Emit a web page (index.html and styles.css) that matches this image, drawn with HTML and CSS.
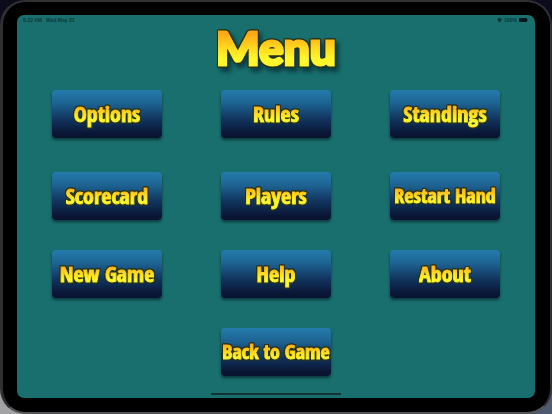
FILE: index.html
```html
<!DOCTYPE html>
<html lang="en">
<head>
<meta charset="utf-8">
<meta name="viewport" content="width=device-width, initial-scale=1">
<title>Menu</title>
<link rel="stylesheet" href="styles.css">
</head>
<body>
<div class="device">
  <main class="screen">
    <header class="status">
      <span class="status-group"><span>6:22 AM</span><span>Wed May 31</span></span>
      <span class="status-group status-right">
        <svg class="wifi" viewBox="0 0 12 9" aria-hidden="true"><path d="M0 3Q6-2 12 3L10.700 4.500Q6 .600 1.300 4.500ZM2.400 5.500Q6 2.500 9.600 5.500L6 9Z"/></svg>
        <span>100%</span>
        <svg class="battery" viewBox="0 0 20 9" aria-hidden="true"><rect width="18" height="9" rx="2"/><path d="M18.500 3Q20 3.500 20 4.500T18.500 6Z"/></svg>
      </span>
    </header>
    <h1 class="title"><span class="gold">Menu</span></h1>
    <nav class="menu">
      <button class="key" type="button"><span class="gold">Options</span></button>
      <button class="key" type="button"><span class="gold">Rules</span></button>
      <button class="key" type="button"><span class="gold">Standings</span></button>
      <button class="key" type="button"><span class="gold">Scorecard</span></button>
      <button class="key" type="button"><span class="gold">Players</span></button>
      <button class="key key-long" type="button"><span class="gold">Restart Hand</span></button>
      <button class="key" type="button"><span class="gold">New Game</span></button>
      <button class="key" type="button"><span class="gold">Help</span></button>
      <button class="key" type="button"><span class="gold">About</span></button>
      <button class="key key-long key-back" type="button"><span class="gold">Back to Game</span></button>
    </nav>
    <div class="home-bar"></div>
  </main>
</div>
</body>
</html>
```
FILE: styles.css
```css
* { box-sizing: border-box; }

body {
  margin: 0;
  min-height: 100vh;
  display: flex;
  background: linear-gradient(90deg, transparent 50%, #4d5a70 50%) 0 100% / 100% 40px no-repeat,
    linear-gradient(#0c0b1c 0 75%, #a3a3a6 95%);
}

.device {
  flex: 1;
  display: flex;
  padding: 13px 15px 14px 14px;
  border: 2px solid #303033;
  border-left-width: 3px;
  border-bottom-color: #555456;
  border-radius: 25px;
  background: #000;
}

.screen {
  flex: 1;
  display: flex;
  flex-direction: column;
  border-radius: 7px;
  background: #196f6d;
}

.status {
  display: flex;
  justify-content: space-between;
  padding: 2px 7px 0 6px;
  font: bold 5px/6px "Liberation Sans", sans-serif;
  color: #0b3a3c;
}

.status-group { display: flex; gap: 4px; }
.status-right { align-items: center; gap: 2px; }
.status svg { fill: #04191c; }
.wifi { width: 5px; height: 4px; }
.battery { width: 9px; height: 4px; }

.title {
  margin: 0;
  font: 900 46px/50px Lato, sans-serif;
  text-align: center;
  filter: drop-shadow(3px 4px 2px #0b3c42);
}

.gold {
  display: inline-block;
  background: linear-gradient(#ffa816 22%, #ffd91f 50%, #fff62b 70%);
  background-clip: text;
  -webkit-background-clip: text;
  color: transparent;
  -webkit-text-stroke: 1px transparent;
  filter: drop-shadow(1px 0 0 #26331b) drop-shadow(-1px 0 0 #26331b) drop-shadow(0 1px 0 #26331b) drop-shadow(0 -1px 0 #26331b);
}

.title .gold {
  -webkit-text-stroke-width: 3px;
}

.menu {
  display: grid;
  grid-template-columns: repeat(3, 1fr);
  grid-template-rows: 82px 78px 78px 48px;
  column-gap: 59px;
  align-items: start;
  padding: 17px 35px 0;
}

.key {
  height: 48px;
  padding: 0 0 3px;
  border: 0;
  border-radius: 4px;
  background: linear-gradient(#247cac, #1d6291 28%, #123862 58%, #0a1636 90%, #09132e);
  box-shadow: 0 2px 3px #0b393f;
  font: bold 22px/32px "Open Sans Condensed", "Liberation Sans Narrow", "Open Sans", sans-serif;
  white-space: nowrap;
}

.key-long {
  padding-bottom: 1px;
  font-size: 20px;
}

.key-back { grid-column: 2; }

.home-bar {
  width: 25%;
  height: 2px;
  margin: auto auto 3px;
  border-radius: 1px;
  background: #163237;
}
```
